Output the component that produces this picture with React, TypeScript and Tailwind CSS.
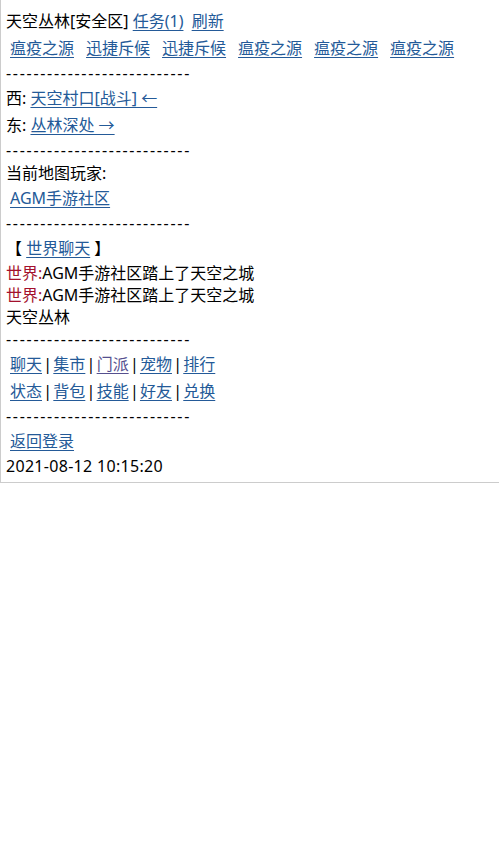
import React from 'react';

const font = { fontFamily: '"Noto Sans", "Noto Sans CJK SC", sans-serif' };

const L: React.FC<{ children: React.ReactNode; className?: string }> = ({ children, className = '' }) => (
  <a href="#" className={`inline-block py-[2px] text-[#245a98] underline underline-offset-[3px] ${className}`}>
    {children}
  </a>
);

const Dashes = () => <div className="leading-[23px] tracking-[1.7px]">---------------------------</div>;

const Nav: React.FC<{ items: string[]; visited?: string }> = ({ items, visited }) => (
  <div className="flex items-center">
    {items.map((it, i) => (
      <React.Fragment key={it}>
        {i > 0 && <span className="inline-flex w-[3.3px] justify-center">|</span>}
        <L className={`mx-1 ${it === visited ? 'text-[#55508f]' : ''}`}>{it}</L>
      </React.Fragment>
    ))}
  </div>
);

export default function App() {
  const quests = ['瘟疫之源', '迅捷斥候', '迅捷斥候', '瘟疫之源', '瘟疫之源', '瘟疫之源'];
  return (
    <div className="border-l border-b border-[#cccccc] bg-white pl-[5px] pt-2 pb-1 text-[16px] leading-[23px] text-black" style={font}>
      <div>
        天空丛林[安全区] <L>任务(1)</L> <L className="ml-1">刷新</L>
      </div>
      <div className="flex gap-3 pl-1">
        {quests.map((q, i) => (
          <L key={i}>{q}</L>
        ))}
      </div>
      <Dashes />
      <div>
        西: <L>天空村口[战斗] ←</L>
      </div>
      <div>
        东: <L>丛林深处 →</L>
      </div>
      <Dashes />
      <div>当前地图玩家:</div>
      <div className="pl-1">
        <L>AGM手游社区</L>
      </div>
      <Dashes />
      <div>
        【 <L>世界聊天</L> 】
      </div>
      <div className="leading-[22px]">
        <span className="text-[#a3102c]">世界:</span>AGM手游社区踏上了天空之城
      </div>
      <div className="leading-[22px]">
        <span className="text-[#a3102c]">世界:</span>AGM手游社区踏上了天空之城
      </div>
      <div className="leading-[22px]">天空丛林</div>
      <Dashes />
      <Nav items={['聊天', '集市', '门派', '宠物', '排行']} visited="门派" />
      <Nav items={['状态', '背包', '技能', '好友', '兑换']} />
      <Dashes />
      <div className="pl-1">
        <L>返回登录</L>
      </div>
      <div className="tracking-[0.3px]">2021-08-12 10:15:20</div>
    </div>
  );
}
